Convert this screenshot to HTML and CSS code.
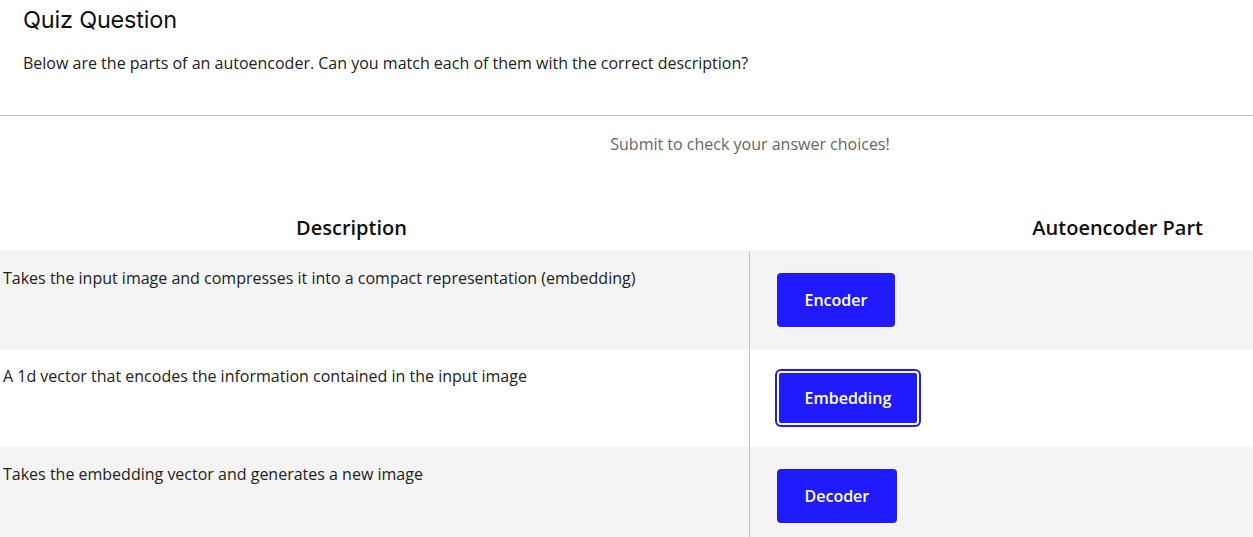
FILE: index.html
```html
<!DOCTYPE html>
<html>
<head>
<meta charset="utf-8">
<link rel="stylesheet" href="styles.css">
</head>
<body>
<div class="page">
  <header class="quiz-head">
    <h1 class="quiz-title">Quiz Question</h1>
    <p class="quiz-prompt">Below are the parts of an autoencoder. Can you match each of them with the correct description?</p>
  </header>
  <section class="quiz-body">
    <p class="hint">Submit to check your answer choices!</p>
    <div class="col-heads">
      <div class="col-head col-head-desc">Description</div>
      <div class="col-head col-head-part">Autoencoder Part</div>
    </div>
    <div class="rows">
      <div class="row row-alt">
        <div class="cell-desc">Takes the input image and compresses it into a compact representation (embedding)</div>
        <div class="cell-part"><button class="part-btn">Encoder</button></div>
      </div>
      <div class="row">
        <div class="cell-desc">A 1d vector that encodes the information contained in the input image</div>
        <div class="cell-part"><button class="part-btn part-btn-focus">Embedding</button></div>
      </div>
      <div class="row row-alt">
        <div class="cell-desc">Takes the embedding vector and generates a new image</div>
        <div class="cell-part"><button class="part-btn">Decoder</button></div>
      </div>
    </div>
  </section>
</div>
</body>
</html>
```
FILE: styles.css
```css
* { box-sizing: border-box; }
html, body { margin: 0; padding: 0; background: #fff; }
body {
  font-family: "Open Sans", "Liberation Sans", sans-serif;
  color: #222;
  overflow: hidden;
}
.quiz-head {
  padding: 5px 23px 0 23px;
  height: 116px;
  border-bottom: 1px solid #c4c4c4;
}
.quiz-title {
  margin: 0;
  font-family: "Inter", "Liberation Sans", sans-serif;
  font-weight: 400;
  font-size: 23.5px;
  line-height: 30px;
  color: #111;
  letter-spacing: -0.2px;
}
.quiz-prompt {
  margin: 16px 0 0 0;
  font-size: 16px;
  line-height: 24px;
  color: #222;
}
.hint {
  margin: 0;
  padding-top: 17px;
  text-align: center;
  padding-left: 247px;
  font-size: 16px;
  line-height: 22px;
  color: #666;
}
.col-heads {
  display: flex;
  margin-top: 48px;
  height: 48px;
  align-items: center;
}
.col-head {
  font-size: 20px;
  font-weight: 600;
  color: #111;
}
.col-head-desc {
  width: 703px;
  text-align: center;
}
.col-head-part {
  flex: 1;
  text-align: right;
  padding-right: 50px;
}
.row {
  display: flex;
  height: 98px;
  background: #fff;
}
.row-alt { background: #f4f4f4; }
.cell-desc {
  width: 750px;
  padding: 15px 0 0 3px;
  font-size: 16px;
  line-height: 24px;
  color: #222;
  border-right: 1px solid #c4c4c4;
}
.cell-part {
  flex: 1;
  padding: 22px 0 0 27px;
}
.part-btn {
  height: 54px;
  padding: 0 27.5px;
  background: #1f1aff;
  color: #fff;
  font-family: "Open Sans", "Liberation Sans", sans-serif;
  font-size: 16px;
  font-weight: 600;
  border: none;
  border-radius: 4px;
  cursor: pointer;
}
.part-btn-focus {
  box-shadow: inset 0 0 0 2px #fff, 0 0 0 2px #1f1aff;
}
```
